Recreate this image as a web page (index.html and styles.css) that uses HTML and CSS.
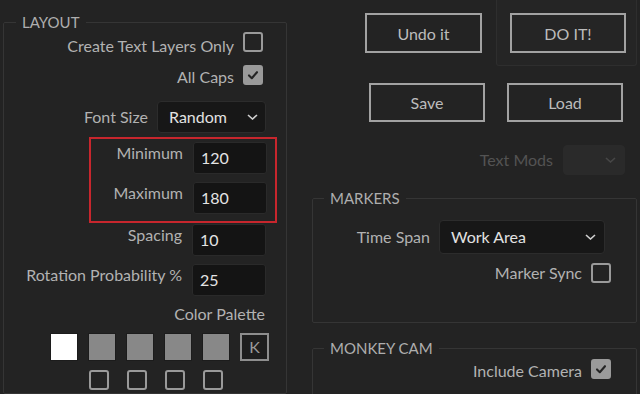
FILE: index.html
```html
<!DOCTYPE html>
<html lang="en">
<head>
 <meta charset="UTF-8">
 <title>Text Tool Panel</title>
 <link rel="stylesheet" href="styles.css">
</head>
<body>
 <div class="app">
 <fieldset class="group layout">
 <legend>LAYOUT</legend>
 <div class="row row-create">
 <span class="label">Create Text Layers Only</span>
 <span class="check"></span>
 </div>
 <div class="row row-caps">
 <span class="label">All Caps</span>
 <span class="check checked">
 <svg viewBox="0 0 20 20"><polyline points="5 10.5 8.5 14 15 6.5"></polyline></svg>
 </span>
 </div>
 <div class="row row-font">
 <span class="label">Font Size</span>
 <div class="select select-font">
 <span>Random</span>
 <svg class="chevron" viewBox="0 0 11 6"><polyline points="1 1 5.5 5 10 1"></polyline></svg>
 </div>
 </div>
 <div class="range-box">
 <div class="row row-field">
 <span class="label">Minimum</span>
 <div class="input">120</div>
 </div>
 <div class="row row-field row-max">
 <span class="label">Maximum</span>
 <div class="input">180</div>
 </div>
 </div>
 <div class="row row-field row-spacing">
 <span class="label">Spacing</span>
 <div class="input">10</div>
 </div>
 <div class="row row-field row-rotation">
 <span class="label">Rotation Probability %</span>
 <div class="input">25</div>
 </div>
 <div class="row row-palette-label">
 <span class="label">Color Palette</span>
 </div>
 <div class="swatches">
 <span class="swatch white"></span>
 <span class="swatch"></span>
 <span class="swatch"></span>
 <span class="swatch"></span>
 <span class="swatch"></span>
 <span class="swatch key">K</span>
 </div>
 <div class="swatch-checks">
 <span class="check"></span>
 <span class="check"></span>
 <span class="check"></span>
 <span class="check"></span>
 </div>
 </fieldset>

 <div class="side">
 <div class="actions-top">
 <button class="btn btn-undo">Undo it</button>
 <div class="do-panel">
 <button class="btn btn-do">DO IT!</button>
 </div>
 </div>
 <div class="actions-file">
 <button class="btn btn-save">Save</button>
 <button class="btn btn-load">Load</button>
 </div>
 <div class="row row-mods">
 <span class="label disabled">Text Mods</span>
 <div class="select select-mods">
 <svg class="chevron" viewBox="0 0 11 6"><polyline points="1 1 5.5 5 10 1"></polyline></svg>
 </div>
 </div>
 <fieldset class="group markers">
 <legend>MARKERS</legend>
 <div class="row row-span">
 <span class="label">Time Span</span>
 <div class="select select-span">
 <span>Work Area</span>
 <svg class="chevron" viewBox="0 0 11 6"><polyline points="1 1 5.5 5 10 1"></polyline></svg>
 </div>
 </div>
 <div class="row row-sync">
 <span class="label">Marker Sync</span>
 <span class="check"></span>
 </div>
 </fieldset>
 <fieldset class="group cam">
 <legend>MONKEY CAM</legend>
 <div class="row row-camera">
 <span class="label">Include Camera</span>
 <span class="check checked">
 <svg viewBox="0 0 20 20"><polyline points="5 10.5 8.5 14 15 6.5"></polyline></svg>
 </span>
 </div>
 </fieldset>
 </div>
 </div>
</body>
</html>
```

FILE: styles.css
```css
* {
 box-sizing: border-box;
}
html, body {
 margin: 0;
 padding: 0;
 height: 100%;
 overflow: hidden;
}
body {
 background: #232323;
 color: #b2b2b2;
 font-family: Lato, "Open Sans", sans-serif;
 font-size: 16px;
 line-height: 18px;
}
.app {
 display: flex;
 align-items: flex-start;
}
.group {
 margin: 0;
 padding: 0;
 min-width: 0;
 border: 1px solid #353535;
 border-radius: 2px;
}
.group legend {
 padding: 0 6px;
 font-size: 15px;
 line-height: 18px;
 color: #aeaeae;
}
.layout {
 width: 284px;
 height: 381px;
 margin: 13px 0 0 3px;
}
.layout legend {
 margin-left: 12px;
}
.row {
 display: flex;
 justify-content: flex-end;
 align-items: center;
 gap: 9px;
}
.label {
 white-space: nowrap;
}
.label.disabled {
 color: #535353;
}
.check {
 width: 20px;
 height: 20px;
 border: 2px solid #9a9a9a;
 border-radius: 3px;
 display: flex;
 align-items: center;
 justify-content: center;
 flex: none;
}
.check.checked {
 background: #9a9a9a;
}
.check svg {
 width: 20px;
 height: 20px;
 fill: none;
 stroke: #242424;
 stroke-width: 2.6;
 stroke-linecap: round;
 stroke-linejoin: round;
}
.select {
 display: flex;
 align-items: center;
 justify-content: space-between;
 background: #171717;
 border: 1px solid #2c2c2c;
 border-radius: 4px;
 color: #e2e2e2;
 font-size: 16px;
}
.chevron {
 width: 11px;
 height: 6px;
 fill: none;
 stroke: #d0d0d0;
 stroke-width: 1.6;
}
.input {
 width: 74px;
 height: 32px;
 padding-left: 7px;
 display: flex;
 align-items: center;
 background: #141414;
 border: 1px solid #2a2a2a;
 border-radius: 3px;
 color: #e4e4e4;
 font-size: 16px;
}
.row-create,
.row-caps {
 height: 20px;
 align-items: flex-start;
 padding-right: 23px;
}
.row-create {
 margin-top: 1px;
}
.row-create .label {
 margin-top: 5px;
}
.row-caps {
 margin-top: 13px;
}
.row-caps .label {
 margin-top: 3px;
}
.row-font {
 margin-top: 16px;
 padding-right: 20px;
}
.select-font {
 width: 109px;
 height: 32px;
 padding: 0 7px 0 11px;
}
.range-box {
 margin: 4px 9px 0 85px;
 padding: 3px 8px 7px 0;
 border: 2px solid #c7262d;
}
.row-field {
 align-items: flex-start;
 gap: 10px;
}
.row-field .label {
 margin-top: 2px;
}
.row-max {
 margin-top: 8px;
}
.row-spacing,
.row-rotation {
 padding-right: 20px;
}
.row-spacing {
 margin-top: 1px;
}
.row-rotation {
 margin-top: 8px;
}
.row-palette-label {
 height: 20px;
 margin-top: 8px;
 padding-right: 21px;
}
.swatches {
 display: flex;
 gap: 10px;
 margin-top: 9px;
 padding-left: 46px;
}
.swatch {
 width: 28px;
 height: 28px;
 background: #888888;
 border: 1px solid #1c1c1c;
}
.swatch.white {
 background: #ffffff;
}
.swatch.key {
 width: 29px;
 background: #1e1e1e;
 border: 2px solid #8e8e8e;
 display: flex;
 align-items: center;
 justify-content: center;
 color: #9a9a9a;
 font-size: 16px;
}
.swatch-checks {
 display: flex;
 gap: 18px;
 margin-top: 9px;
 padding-left: 85px;
}
.side {
 flex: 1;
 min-width: 0;
}
.btn {
 background: transparent;
 border: 2px solid #a2a2a2;
 color: #bcbcbc;
 font-family: inherit;
 font-size: 16px;
 padding: 0;
 cursor: pointer;
}
.actions-top {
 display: flex;
 justify-content: flex-end;
 align-items: flex-start;
}
.btn-undo {
 width: 117px;
 height: 40px;
 margin-top: 13px;
}
.do-panel {
 width: 141px;
 height: 66px;
 margin: 0 3px 0 14px;
 padding: 13px 0 0 13px;
 background: #252525;
 border: 1px solid #2e2e2e;
 border-top: none;
 border-radius: 0 0 3px 3px;
}
.btn-do {
 width: 116px;
 height: 40px;
}
.actions-file {
 display: flex;
 justify-content: flex-end;
 gap: 22px;
 margin-top: 17px;
 padding-right: 17px;
}
.btn-save,
.btn-load {
 width: 116px;
 height: 39px;
}
.row-mods {
 margin-top: 23px;
 padding-right: 15px;
 gap: 10px;
}
.select-mods {
 width: 62px;
 height: 30px;
 padding-right: 8px;
 justify-content: flex-end;
 background: #2a2a2a;
 border-color: #2a2a2a;
}
.select-mods .chevron {
 stroke: #474747;
}
.markers,
.cam {
 margin: 14px 3px 0 25px;
}
.markers legend,
.cam legend {
 margin-left: 11px;
}
.markers {
 height: 134px;
}
.row-span {
 margin-top: 13px;
 padding-right: 31px;
}
.select-span {
 width: 166px;
 height: 34px;
 padding: 0 8px 0 11px;
}
.row-sync {
 margin-top: 9px;
 padding-right: 25px;
}
.cam {
 margin-top: 16px;
 height: 60px;
}
.row-camera {
 height: 20px;
 align-items: flex-start;
 margin-top: 2px;
 padding-right: 25px;
}
.row-camera .label {
 margin-top: 3px;
}
```
